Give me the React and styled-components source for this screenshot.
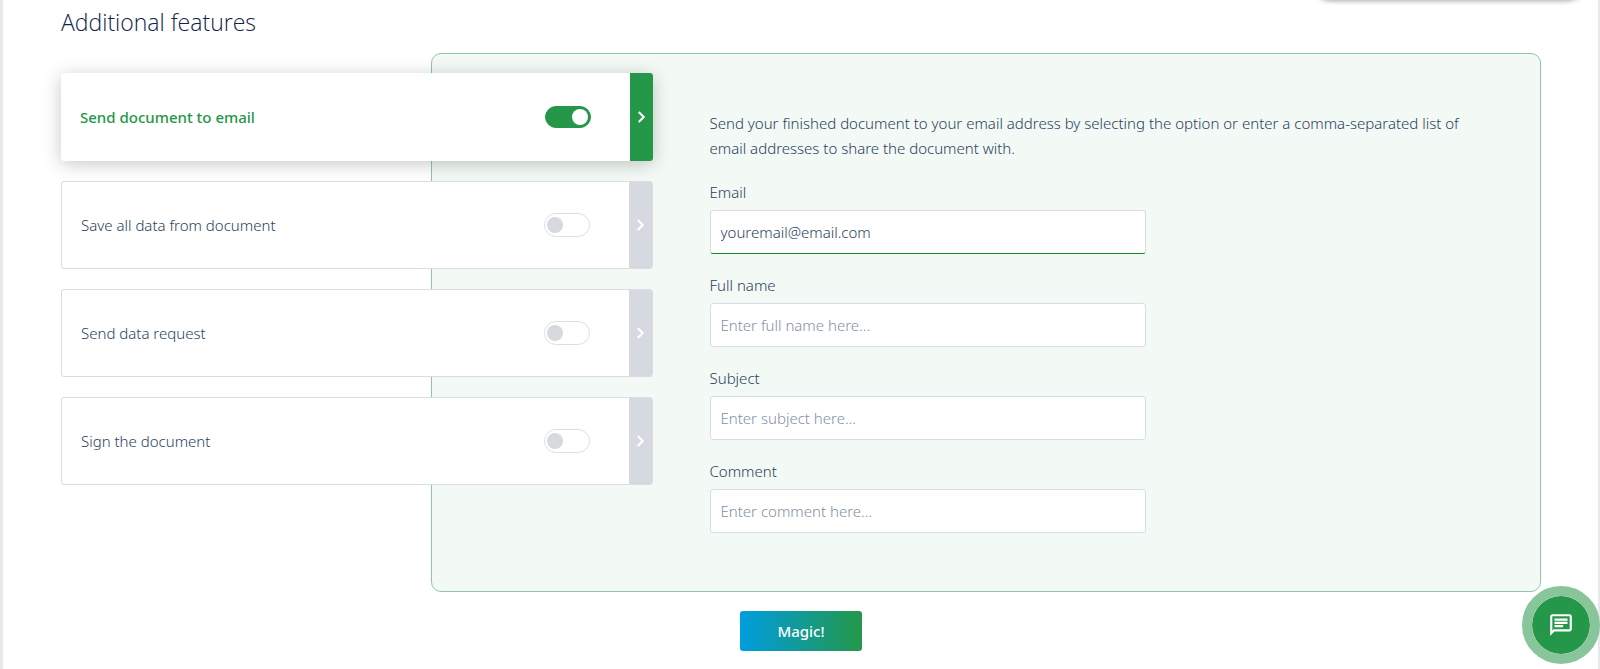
import React, { useState } from 'react';
import styled, { createGlobalStyle } from 'styled-components';
import { MdOutlineChat } from 'react-icons/md';

const GlobalStyle = createGlobalStyle`
  * {
    box-sizing: border-box;
  }

  body {
    margin: 0;
    background: #fff;
    color: #2b3f60;
    font-family: 'Noto Sans', 'Open Sans', sans-serif;
    font-size: 15px;
    font-weight: 300;
  }

  input, button {
    font: inherit;
    color: inherit;
  }
`;

const Page = styled.main`
  min-height: 100vh;
  padding: 7px 57px 18px 58px;
  border-left: 3px solid #e6e8ec;
  border-right: 2px solid #e6eaef;
`;

const Title = styled.h2`
  margin: 0 0 16px;
  color: #10244a;
  font-family: 'Open Sans', 'Noto Sans', sans-serif;
  font-size: 23px;
  font-weight: 300;
  line-height: 30px;
`;

const Features = styled.div`
  display: grid;
  grid-template-columns: 25% 15% 60%;
  align-items: start;
`;

const CardList = styled.div`
  grid-column: 1 / 3;
  grid-row: 1;
  z-index: 1;
  display: flex;
  flex-direction: column;
  gap: 20px;
  padding-top: 20px;
`;

const Card = styled.div`
  display: flex;
  align-items: center;
  height: 88px;
  padding-left: 19px;
  overflow: hidden;
  background: #fff;
  border: ${({ $active }) => $active ? 'none' : '1px solid #d9dce1'};
  border-radius: 3px;
  box-shadow: ${({ $active }) => $active ? '0 3px 18px rgba(0, 0, 0, 0.22)' : 'none'};
`;

const CardLabel = styled.label`
  flex: 1;
  cursor: pointer;
  color: ${({ $active }) => $active ? '#1f9747' : 'inherit'};
  font-weight: ${({ $active }) => $active ? 500 : 300};
`;

const Toggle = styled.input.attrs({ type: 'checkbox' })`
  appearance: none;
  display: flex;
  align-items: center;
  width: 46px;
  height: 24px;
  margin: 0 39px 0 0;
  padding: 0 2px;
  background: #fff;
  border: 1px solid #dcdfe4;
  border-radius: 12px;
  cursor: pointer;

  &::before {
    content: '';
    width: 16px;
    height: 16px;
    background: #d6d9de;
    border-radius: 50%;
  }

  &:checked {
    justify-content: flex-end;
    height: 22px;
    background: #249749;
    border-color: #249749;
  }

  &:checked::before {
    background: #fff;
  }
`;

const OpenButton = styled.button`
  display: flex;
  align-items: center;
  justify-content: center;
  align-self: stretch;
  width: 23px;
  padding: 0;
  border: none;
  background: ${({ $active }) => $active ? '#249749' : '#d6d9df'};
  cursor: pointer;
`;

const Panel = styled.form`
  grid-column: 2 / 4;
  grid-row: 1;
  display: flex;
  flex-direction: column;
  padding: 57px 60px 58px 25%;
  background: #f3f9f5;
  border: 1px solid #8fc9a3;
  border-radius: 10px;
`;

const Description = styled.p`
  margin: 0 0 21px;
  line-height: 25px;
`;

const Fields = styled.div`
  display: flex;
  flex-direction: column;
  gap: 21px;
  max-width: 436px;
`;

const Field = styled.div`
  display: flex;
  flex-direction: column;
  gap: 8px;
  line-height: 20px;
`;

const TextInput = styled.input`
  width: 100%;
  height: 44px;
  padding: 0 10px;
  background: #fff;
  border: 1px solid #d8dce3;
  border-bottom-color: ${({ $filled }) => $filled ? '#128a22' : '#d8dce3'};
  border-radius: 3px;
  outline: none;

  &::placeholder {
    color: #8490a4;
    opacity: 1;
  }
`;

const Actions = styled.div`
  display: flex;
  justify-content: center;
  margin-top: 19px;
`;

const MagicButton = styled.button`
  width: 122px;
  height: 40px;
  padding: 0;
  color: #fff;
  font-weight: 500;
  background: linear-gradient(90deg, #009de0, #249749);
  border: none;
  border-radius: 3px;
  cursor: pointer;
`;

// floating bar that is scrolled out, only its shadow shows
const FloatingBar = styled.div`
  position: fixed;
  top: -39px;
  right: 14px;
  width: 274px;
  height: 39px;
  border-radius: 20px;
  background: #fff;
  box-shadow: 0 1px 5px rgba(0, 0, 0, 0.35);
`;

const ChatButton = styled.button`
  position: fixed;
  right: 0;
  bottom: 5px;
  z-index: 2;
  display: flex;
  align-items: center;
  justify-content: center;
  width: 78px;
  height: 78px;
  padding: 0;
  color: #fff;
  background: #249749;
  background-clip: padding-box;
  border: 10px solid #88c59b;
  border-radius: 50%;
  cursor: pointer;
`;

const features = [
  { id: 'send', name: 'Send document to email' },
  { id: 'save', name: 'Save all data from document' },
  { id: 'request', name: 'Send data request' },
  { id: 'sign', name: 'Sign the document' },
];

const fields = [
  { id: 'email', label: 'Email', type: 'email', placeholder: 'Enter email here...' },
  { id: 'fullName', label: 'Full name', type: 'text', placeholder: 'Enter full name here...' },
  { id: 'subject', label: 'Subject', type: 'text', placeholder: 'Enter subject here...' },
  { id: 'comment', label: 'Comment', type: 'text', placeholder: 'Enter comment here...' },
];

const Chevron = () => (
  <svg width="8" height="12" viewBox="0 0 8 12" fill="none" stroke="#fff" strokeWidth="2.2">
    <path d="M.7 1 5.7 6 .7 11" />
  </svg>
);

const FeatureCard = ({ id, name, active, enabled, onToggle, onOpen }) => (
  <Card $active={active}>
    <CardLabel htmlFor={id} $active={active}>{name}</CardLabel>
    <Toggle id={id} checked={enabled} onChange={onToggle} />
    <OpenButton type="button" $active={active} aria-label={`Open ${name}`} onClick={onOpen}>
      <Chevron />
    </OpenButton>
  </Card>
);

const App = () => {
  const [active, setActive] = useState('send');
  const [enabled, setEnabled] = useState({ send: true });
  const [values, setValues] = useState({ email: 'youremail@email.com' });

  const toggle = id => setEnabled({ ...enabled, [id]: !enabled[id] });

  return (
    <>
      <GlobalStyle />
      <FloatingBar />
      <Page>
        <Title>Additional features</Title>
        <Features>
          <CardList>
            {features.map(feature => (
              <FeatureCard
                key={feature.id}
                {...feature}
                active={active === feature.id}
                enabled={!!enabled[feature.id]}
                onToggle={() => toggle(feature.id)}
                onOpen={() => setActive(feature.id)}
              />
            ))}
          </CardList>
          <Panel id="share" onSubmit={e => e.preventDefault()}>
            <Description>
              Send your finished document to your email address by selecting the option or enter a
              comma-separated list of email addresses to share the document with.
            </Description>
            <Fields>
              {fields.map(({ id, label, type, placeholder }) => (
                <Field key={id}>
                  <label htmlFor={id}>{label}</label>
                  <TextInput
                    id={id}
                    type={type}
                    placeholder={placeholder}
                    value={values[id] || ''}
                    $filled={!!values[id]}
                    onChange={e => setValues({ ...values, [id]: e.target.value })}
                  />
                </Field>
              ))}
            </Fields>
          </Panel>
        </Features>
        <Actions>
          <MagicButton type="submit" form="share">Magic!</MagicButton>
        </Actions>
      </Page>
      <ChatButton type="button" aria-label="Open chat">
        <MdOutlineChat size={26} />
      </ChatButton>
    </>
  );
};

export default App;
